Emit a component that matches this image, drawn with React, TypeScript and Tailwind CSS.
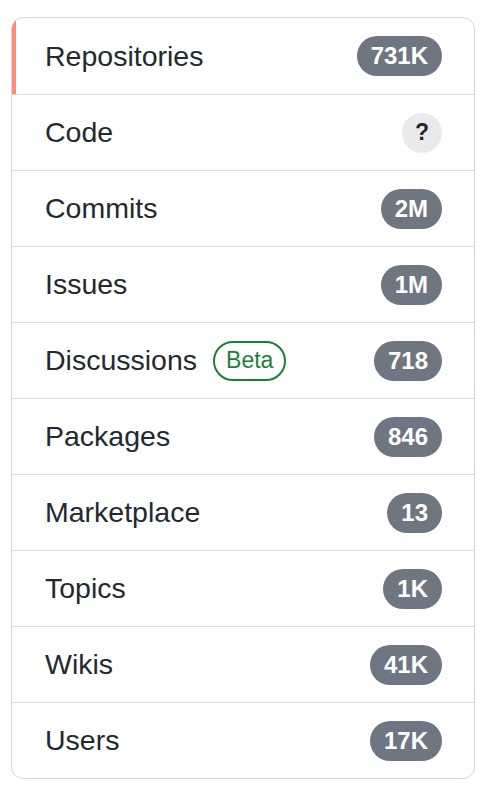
import React from 'react';

interface Item {
  label: string;
  count: string;
  beta?: boolean;
  selected?: boolean;
}

const items: Item[] = [
  { label: 'Repositories', count: '731K', selected: true },
  { label: 'Code', count: '?' },
  { label: 'Commits', count: '2M' },
  { label: 'Issues', count: '1M' },
  { label: 'Discussions', count: '718', beta: true },
  { label: 'Packages', count: '846' },
  { label: 'Marketplace', count: '13' },
  { label: 'Topics', count: '1K' },
  { label: 'Wikis', count: '41K' },
  { label: 'Users', count: '17K' },
];

const Counter = ({ count }: { count: string }) => {
  if (count === '?') {
    return (
      <span className="flex h-10 w-10 items-center justify-center rounded-full bg-[#e9eaec] text-[23px] font-bold text-[#24292f]">
        ?
      </span>
    );
  }
  return (
    <span className="flex h-10 min-w-10 items-center justify-center rounded-full bg-[#6e7781] px-[14px] text-[24px] font-bold text-white">
      {count}
    </span>
  );
};

const App = () => {
  return (
    <div
      className="min-h-[790px] bg-white pl-[11px] pr-[15px] pt-[17px]"
      style={{ fontFamily: '"Liberation Sans", Arial, sans-serif' }}
    >
      <nav className="overflow-hidden rounded-xl border border-[#d0d7de]">
        {items.map((item, i) => (
          <div
            key={item.label}
            className={`relative flex h-[76px] items-center justify-between pl-[33px] pr-[32px] text-[28.5px] text-[#24292f] ${
              i > 0 ? 'border-t border-[#d8dee4]' : ''
            }`}
          >
            {item.selected && <span className="absolute left-0 top-0 bottom-0 w-[4px] bg-[#fd8c73]" />}
            <span className="flex items-center gap-4">
              {item.label}
              {item.beta && (
                <span className="flex h-10 items-center rounded-full border-2 border-[#1a7f37] px-[11px] text-[23px] text-[#1a7f37]">
                  Beta
                </span>
              )}
            </span>
            <Counter count={item.count} />
          </div>
        ))}
      </nav>
    </div>
  );
};

export default App;
